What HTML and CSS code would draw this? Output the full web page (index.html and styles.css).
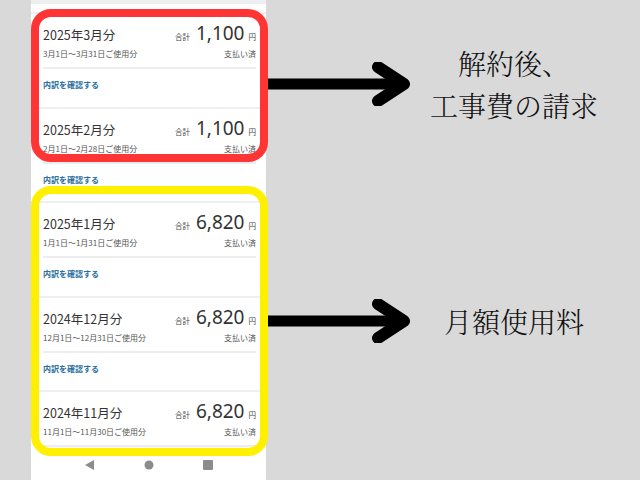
FILE: index.html
```html
<!DOCTYPE html>
<html lang="ja">
<head>
  <meta charset="UTF-8" />
  <meta name="viewport" content="width=device-width, initial-scale=1.0"/>
  <title>ご利用料金の履歴</title>
  <link rel="stylesheet" href="styles.css">
</head>
<body>
  <div class="stage">
    <div class="phone">
      <div class="list">
        <div class="peek"></div>

        <div class="card">
          <div class="head">
            <span class="month">2025年3月分</span>
            <span class="total"><small>合計</small><b>1,100</b><small>円</small></span>
          </div>
          <div class="sub"><span>3月1日〜3月31日ご使用分</span><span>支払い済</span></div>
          <div class="link">内訳を確認する</div>
        </div>

        <div class="card">
          <div class="head">
            <span class="month">2025年2月分</span>
            <span class="total"><small>合計</small><b>1,100</b><small>円</small></span>
          </div>
          <div class="sub"><span>2月1日〜2月28日ご使用分</span><span>支払い済</span></div>
          <div class="link">内訳を確認する</div>
        </div>

        <div class="card">
          <div class="head">
            <span class="month">2025年1月分</span>
            <span class="total"><small>合計</small><b>6,820</b><small>円</small></span>
          </div>
          <div class="sub"><span>1月1日〜1月31日ご使用分</span><span>支払い済</span></div>
          <div class="link">内訳を確認する</div>
        </div>

        <div class="card">
          <div class="head">
            <span class="month">2024年12月分</span>
            <span class="total"><small>合計</small><b>6,820</b><small>円</small></span>
          </div>
          <div class="sub"><span>12月1日〜12月31日ご使用分</span><span>支払い済</span></div>
          <div class="link">内訳を確認する</div>
        </div>

        <div class="card">
          <div class="head">
            <span class="month">2024年11月分</span>
            <span class="total"><small>合計</small><b>6,820</b><small>円</small></span>
          </div>
          <div class="sub"><span>11月1日〜11月30日ご使用分</span><span>支払い済</span></div>
        </div>
      </div>

      <div class="navbar">
        <svg width="10" height="10" viewBox="0 0 10 10"><polygon points="9,0 9,10 0,5" /></svg>
        <svg width="10" height="10" viewBox="0 0 10 10"><circle cx="5" cy="5" r="4.5" /></svg>
        <svg width="10" height="10" viewBox="0 0 10 10"><rect x="0" y="0" width="10" height="10" rx="1" /></svg>
      </div>
    </div>

    <div class="notes">
      <div class="note first">
        <svg class="arrow" width="142" height="44" viewBox="0 0 142 44">
          <line x1="0" y1="22" x2="132" y2="22" />
          <polyline points="110,5 136,22 110,39" />
        </svg>
        <div class="label">解約後、<br>工事費の請求</div>
      </div>
      <div class="note second">
        <svg class="arrow" width="142" height="44" viewBox="0 0 142 44">
          <line x1="0" y1="22" x2="132" y2="22" />
          <polyline points="110,5 136,22 110,39" />
        </svg>
        <div class="label">月額使用料</div>
      </div>
    </div>

    <!-- 注釈の枠 -->
    <div class="frame red"></div>
    <div class="frame yellow"></div>
  </div>
</body>
</html>
```

FILE: styles.css
```css
body {
  margin: 0;
  background: #d9d9d9;
  font-family: "Noto Sans CJK JP", "Noto Sans", sans-serif;
  color: #333;
}
.stage {
  position: relative;
  display: flex;
  width: 640px;
  height: 480px;
  overflow: hidden;
}
.phone {
  margin-left: 31px;
  width: 235px;
  background: #fff;
  display: flex;
  flex-direction: column;
}
.list {
  flex: 1;
  overflow: hidden;
}
.peek {
  height: 4px;
  background: #eceef0;
  margin-bottom: 8px;
}
.card {
  box-sizing: border-box;
  height: 94.5px;
  padding: 9px 10px 0 12px;
  border-top: 2px solid #eeeff1;
}
.head {
  display: flex;
  justify-content: space-between;
  align-items: baseline;
  height: 21px;
  line-height: 21px;
}
.month {
  font-size: 12.5px;
  color: #333;
}
.total small {
  font-size: 7.5px;
  color: #444;
}
.total b {
  font-family: "Noto Sans", sans-serif;
  font-weight: 400;
  font-size: 19px;
  color: #333;
  margin: 0 4px 0 6px;
}
.sub {
  display: flex;
  justify-content: space-between;
  font-size: 8px;
  line-height: 12px;
  margin-top: 4px;
  color: #555;
  padding-bottom: 7px;
  border-bottom: 2px solid #ededed;
}
.link {
  font-size: 8px;
  font-weight: bold;
  line-height: 12px;
  margin-top: 10px;
  color: #2a6f9e;
}
.navbar {
  height: 30px;
  display: flex;
  justify-content: center;
  align-items: center;
  gap: 49px;
}
.navbar svg {
  fill: #8c8c8c;
}
.notes {
  flex: 1;
  display: flex;
  flex-direction: column;
}
.note {
  display: flex;
  align-items: center;
}
.note.first {
  margin-top: 42px;
  height: 84px;
}
.note.second {
  margin-top: 173px;
  height: 44px;
}
.arrow {
  margin-left: 2px;
  flex: none;
}
.arrow line,
.arrow polyline {
  stroke: #000;
  fill: none;
  stroke-width: 11;
  stroke-linejoin: round;
}
.arrow polyline {
  stroke-width: 12;
  stroke-linecap: round;
}
.label {
  flex: 1;
  text-align: center;
  padding-right: 22px;
  font-family: "Noto Serif CJK JP", "Liberation Serif", serif;
  font-weight: 300;
  font-size: 28px;
  line-height: 42px;
  color: #111;
}
.frame {
  position: absolute;
  left: 31px;
  width: 237px;
  box-sizing: border-box;
  border: 8px solid;
  border-radius: 20px;
}
.frame.red {
  top: 9px;
  height: 153px;
  border-color: #ff3535;
}
.frame.yellow {
  top: 186px;
  height: 270px;
  border-color: #fff000;
}
```
